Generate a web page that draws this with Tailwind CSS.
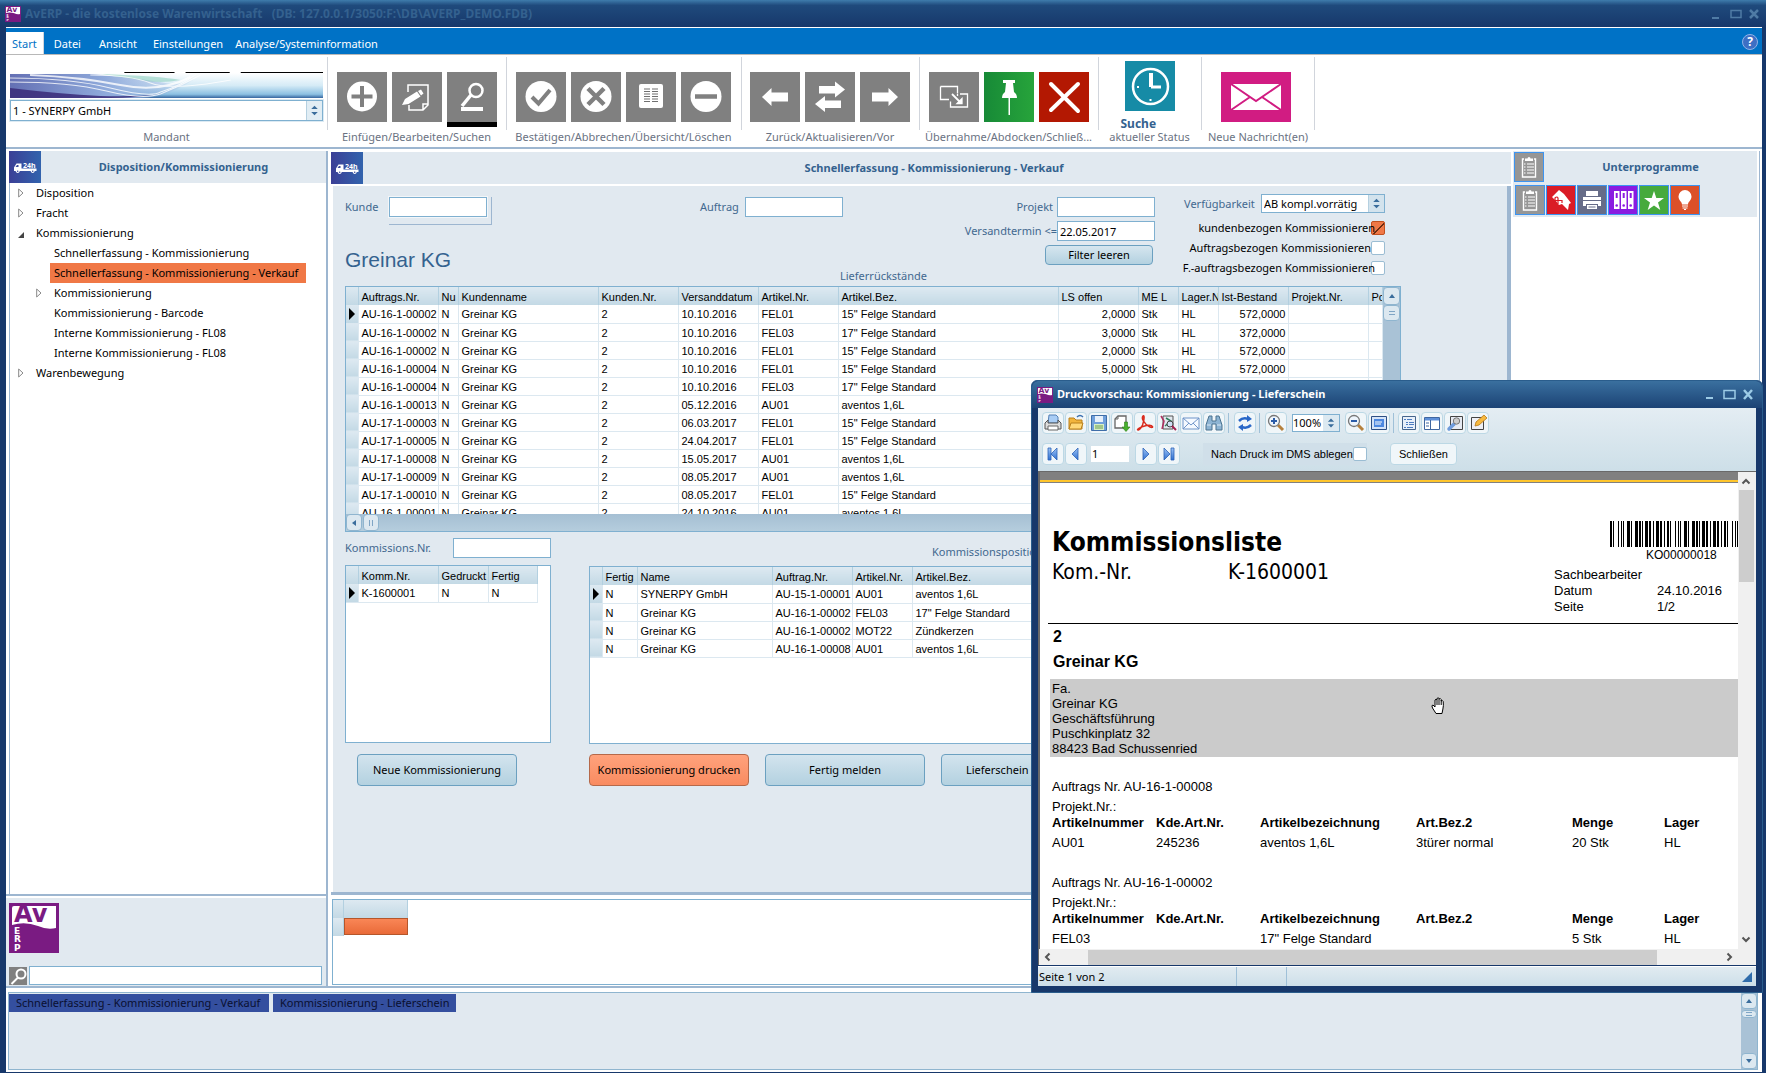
<!DOCTYPE html>
<html lang="de">
<head>
<meta charset="utf-8">
<title>AvERP - die kostenlose Warenwirtschaft</title>
<script src="https://cdn.jsdelivr.net/npm/@tailwindcss/browser@4"></script>
</head>
<body class="font-['Noto_Sans',sans-serif] text-[11px] text-black">

<svg class="absolute size-0" aria-hidden="true">
  <defs>
    <linearGradient id="gTruck"><stop offset="0" stop-color="#3b3f96"/><stop offset="1" stop-color="#3263ad"/></linearGradient>
    <linearGradient id="gBlue" x1="0" x2="0" y1="0" y2="1"><stop offset="0" stop-color="#9cc3f5"/><stop offset="1" stop-color="#2f6fd0"/></linearGradient>
    <symbol id="truck" viewBox="0 0 32 32">
      <rect width="32" height="32" fill="url(#gTruck)"/>
      <path fill="#fff" d="M5 20v-3.500l2.500-4H12.500v5H27.500v2.500z"/>
      <circle cx="8.700" cy="20.300" r="1.800" fill="#fff"/><circle cx="23.700" cy="20.300" r="1.800" fill="#fff"/>
      <circle cx="8.700" cy="20.300" r=".8" fill="#3b4a9c"/><circle cx="23.700" cy="20.300" r=".8" fill="#3b4a9c"/>
      <path d="M6.500 16l1.500-2H9.500v2z" fill="#3b4a9c"/>
      <text x="14" y="16.500" font-size="7" font-weight="700" font-family="Noto Sans, sans-serif" fill="#fff">24h</text>
    </symbol>
    <symbol id="logo" viewBox="0 0 50 50">
      <rect width="50" height="50" fill="#7a1b82"/>
      <path fill="#fff" d="M3 5q0-2 2-2h42v22q-9 2-18-2-13-5-26-1z"/>
      <text x="5" y="19" font-size="24" font-weight="700" font-family="DejaVu Sans, sans-serif" fill="#7a1b82">Av</text>
      <g font-size="9" font-weight="700" font-family="DejaVu Sans, sans-serif" fill="#fff"><text x="5" y="30.500">E</text><text x="5" y="39">R</text><text x="5" y="47.500">P</text></g>
    </symbol>
    <symbol id="spin" viewBox="0 0 16 18"><path fill="#3a6d9c" d="M8 4l3.500 3.500h-7zM8 14l3.500-3.500h-7z"/></symbol>
    <symbol id="clip" viewBox="0 0 28 28">
      <path fill="none" stroke="#fff" stroke-width="1.400" d="M9 6H7.500v18h13V6H19"/>
      <path fill="#fff" d="M10 8V5.500h2.500a1.500 1.500 0 0 1 3 0H18V8z"/>
      <path stroke="#fff" stroke-width="1.200" d="M9 11h1.500M12 11h7M9 14h1.500M12 14h7M9 17h1.500M12 17h7M9 20h1.500M12 20h7"/>
    </symbol>
  </defs>
</svg>

<div class="relative flex min-h-screen flex-col bg-[#17386b] pb-px">

  <!-- window title -->
  <header class="flex h-[27px] items-center bg-linear-to-b from-[#3f7cac] from-0% via-[#1f4a7c] via-20% to-[#17386b] pl-[5px] pr-1.5 text-[#34618f]">
    <svg class="size-4"><use href="#logo"/></svg>
    <h1 class="ml-1 whitespace-pre text-xs font-bold">AvERP - die kostenlose Warenwirtschaft   (DB: 127.0.0.1/3050:F:\DB\AVERP_DEMO.FDB)</h1>
    <svg class="ml-auto h-4 w-12" fill="none" stroke="#4f7ba5" viewBox="0 0 48 16"><path stroke-width="2" d="M0 12h7"/><path stroke-width="1.500" d="M19 4.500h10v7H19z"/><path stroke-width="2.500" d="M38 4l8 8M46 4l-8 8"/></svg>
  </header>

  <div class="ml-1.5 mr-1 flex flex-1 flex-col bg-white">
    <!-- menu -->
    <nav class="mt-px flex h-[26px] items-end bg-[#0072c6] text-white [&>a]:flex [&>a]:h-[22px] [&>a]:items-center [&>a]:pt-0.5">
      <a href="#" class="border-r border-gray-300 bg-white px-1.5 text-[#0072c6]">Start</a>
      <a href="#" class="px-2.5">Datei</a>
      <a href="#" class="px-2">Ansicht</a>
      <a href="#" class="pl-2 pr-1.5">Einstellungen</a>
      <a href="#" class="px-1.5">Analyse/Systeminformation</a>
      <button class="mb-1 ml-auto mr-1 size-4 rounded-full border border-[#8fb2e8] bg-[#3d6fc4] text-xs leading-3 font-bold" aria-label="Hilfe">?</button>
    </nav>

    <!-- ribbon -->
    <section class="flex h-[95px] border-t border-b-2 border-t-[#b8b8b8] border-b-[#9db6d0] pt-0.5 text-gray-500 [&>div]:relative [&>div]:flex [&>div]:flex-col [&>div]:items-center [&>div>p]:whitespace-nowrap [&>div>p]:leading-4 [&_button]:size-[50px] [&_button]:bg-[#808080]">
      <div class="w-[321px] px-1">
        <svg class="mt-[15px] h-[26px] w-full" viewBox="0 0 312 26" preserveAspectRatio="none">
          <defs>
            <linearGradient id="b1" x1="0" x2="0" y1="0" y2="1"><stop offset="0" stop-color="#fff"/><stop offset=".5" stop-color="#d5ebf6"/><stop offset=".85" stop-color="#8cc0e2"/><stop offset="1" stop-color="#35659f"/></linearGradient>
            <linearGradient id="b2"><stop offset="0" stop-color="#6470b4"/><stop offset=".5" stop-color="#8faadb"/><stop offset="1" stop-color="#9fb6e0" stop-opacity="0"/></linearGradient>
          </defs>
          <rect y="1" width="312" height="25" fill="url(#b1)"/>
          <path fill="url(#b2)" d="M0 2h80q50 4 80 10 20 0 30-9-30 22-60 23H0z"/>
          <path fill="#3a2a78" opacity=".85" d="M0 16q50 6 90 8 40 1 60-2-25 4-50 4H0z"/>
          <path fill="#8fd0c0" opacity=".6" d="M90 2q60 2 80 6-20 4-40 0z"/>
          <g fill="none" stroke="#fff" opacity=".8"><path d="M0 6q60 0 100 10t50 4q20-6 36-18"/><path d="M0 10q60 0 96 9t54 3q20-8 40-19"/><path stroke-width="2" d="M20 3q50 2 90 10t70-8"/><path d="M80 3q40 0 60 8t80-3"/></g>
          <path stroke="#000" d="M114 .5h50M175 .5h44M230 .5h82"/>
        </svg>
        <label class="relative mt-0.5 flex h-[21px] w-full border border-[#7fb0d0] bg-white text-black outline outline-[#dceaf3]">
          <select class="w-full appearance-none px-0.5 leading-4" aria-label="Mandant"><option>1 - SYNERPY GmbH</option></select>
          <svg class="pointer-events-none h-full w-4 shrink-0 border-l border-[#b5d0e0] bg-[#e1edf4]"><use href="#spin"/></svg>
        </label>
        <p class="mt-2">Mandant</p>
      </div>
      <div class="w-[179px] before:absolute before:left-0 before:top-0 before:h-[73px] before:w-px before:bg-gray-300">
        <div class="mt-[15px] flex h-[57px] items-start gap-[5px]">
          <button aria-label="Einfügen"><svg viewBox="0 0 50 50"><circle cx="25" cy="24.500" r="15" fill="#fff"/><path stroke="#808080" stroke-width="4" d="M25 14v21M14.500 24.500h21"/></svg></button>
          <button aria-label="Bearbeiten"><svg viewBox="0 0 50 50"><path fill="none" stroke="#fff" stroke-width="1.500" d="M16 20v-7h20v20l-5 5H17v-5M36 32h-5v6"/><path fill="#fff" d="M10 33l3-6 12-7.500 3.500 5-12 7.500zM26 19l3-1.500 2.500 4-2.500 2z"/></svg></button>
          <button class="box-content border-b-5 border-black" aria-label="Suchen"><svg viewBox="0 0 50 50" fill="none" stroke="#fff"><circle cx="29" cy="18.500" r="6.500" stroke-width="2.500"/><path stroke-width="3.500" d="M24 23l-9 11"/><path stroke-width="4" d="M14 37h22"/></svg></button>
        </div>
        <p>Einfügen/Bearbeiten/Suchen</p>
      </div>
      <div class="w-[235px] before:absolute before:left-0 before:top-0 before:h-[73px] before:w-px before:bg-gray-300">
        <div class="mt-[15px] flex h-[57px] items-start gap-[5px]">
          <button aria-label="Bestätigen"><svg viewBox="0 0 50 50"><circle cx="25" cy="24.500" r="15.500" fill="#fff"/><path fill="none" stroke="#808080" stroke-width="4" d="M16 25l6.500 6.500L34 18"/></svg></button>
          <button aria-label="Abbrechen"><svg viewBox="0 0 50 50"><circle cx="25" cy="24.500" r="15.500" fill="#fff"/><path stroke="#808080" stroke-width="4.500" d="M17 16.500l16 16M33 16.500l-16 16"/></svg></button>
          <button aria-label="Übersicht"><svg viewBox="0 0 50 50"><rect x="13" y="12" width="24" height="24" rx="2" fill="#fff"/><path stroke="#707070" stroke-width="1.200" d="M18 17h6M18 19.500h6M18 22h6M18 24.500h6M18 27h6M18 29.500h6M26 17h6M26 19.500h6M26 22h6M26 24.500h6M26 27h6M26 29.500h6"/></svg></button>
          <button aria-label="Löschen"><svg viewBox="0 0 50 50"><circle cx="25" cy="24.500" r="15.500" fill="#fff"/><path stroke="#808080" stroke-width="4.500" d="M14 24.500h22"/></svg></button>
        </div>
        <p>Bestätigen/Abbrechen/Übersicht/Löschen</p>
      </div>
      <div class="w-[178px] before:absolute before:left-0 before:top-0 before:h-[73px] before:w-px before:bg-gray-300">
        <div class="mt-[15px] flex h-[57px] items-start gap-[5px]">
          <button aria-label="Zurück"><svg viewBox="0 0 50 50" fill="#fff"><path d="M12 25l9.500-9v4.500H38v9H21.500V34z"/></svg></button>
          <button aria-label="Aktualisieren"><svg viewBox="0 0 50 50" fill="#fff"><path d="M40 17.500L30 9.500V14H14v7.500h16v4zM10 32l10-8v4.500h16V36H20v4z"/></svg></button>
          <button aria-label="Vor"><svg viewBox="0 0 50 50" fill="#fff"><path d="M38 25l-9.500-9v4.500H12v9h16.500V34z"/></svg></button>
        </div>
        <p>Zurück/Aktualisieren/Vor</p>
      </div>
      <div class="w-[179px] before:absolute before:left-0 before:top-0 before:h-[73px] before:w-px before:bg-gray-300">
        <div class="mt-[15px] flex h-[57px] items-start gap-[5px]">
          <button aria-label="Übernahme"><svg viewBox="0 0 50 50" fill="none" stroke="#fff" stroke-width="1.300"><path d="M11.500 14.500H28.500v7M11.500 14.500v13H20M28.500 22v2M31 22h7.500v13h-17V29.500"/><path stroke-width="1.800" d="M23 22l8 8"/><path fill="#fff" d="M33 26.500v5h-5z"/></svg></button>
          <button class="bg-[linear-gradient(90deg,#178a37,#27a43b)]!" aria-label="Abdocken"><svg viewBox="0 0 50 50" fill="#fff"><path d="M19 8h12v3h-2l1 9q3 2 3 6H18q0-4 3-6l1-9h-3zM24.500 26h1.500v17h-1.500z"/></svg></button>
          <button class="bg-[#b31802]!" aria-label="Schließen"><svg viewBox="0 0 50 50" stroke="#fff" stroke-width="4" stroke-linecap="round"><path d="M12 12l27 27M39 12L12 38"/></svg></button>
        </div>
        <p>Übernahme/Abdocken/Schließ...</p>
      </div>
      <div class="w-[103px] before:absolute before:left-0 before:top-0 before:h-[73px] before:w-px before:bg-gray-300">
        <div class="mt-1 flex h-[68px] flex-col">
          <button class="bg-[#168ba6]!" aria-label="Suche"><svg viewBox="0 0 50 50" fill="none" stroke="#fff"><circle cx="25.500" cy="25.500" r="17.500" stroke-width="2.500"/><path stroke-width="4" d="M26 12v14"/><path stroke-width="3" d="M26 26h10"/><path stroke-width="2" d="M12 26h2M25.500 38v2"/></svg></button>
          <span class="-ml-1 mt-[3px] text-xs leading-5 font-bold text-[#34628f]">Suche</span>
        </div>
        <p>aktueller Status</p>
      </div>
      <div class="w-[114px] before:absolute before:left-0 before:top-0 before:h-[73px] before:w-px before:bg-gray-300 after:absolute after:right-0 after:top-0 after:h-[73px] after:w-px after:bg-gray-300">
        <div class="mt-[15px] flex h-[57px] items-start pr-1">
          <button class="w-[70px]! bg-[#d11c82]!" aria-label="Neue Nachrichten"><svg viewBox="0 0 70 50"><rect x="10" y="12" width="50" height="26" fill="#fff"/><path fill="none" stroke="#d11c82" stroke-width="2" d="M10 12l25 17 25-17M10 38l19-13M60 38L41 25"/></svg></button>
        </div>
        <p>Neue Nachricht(en)</p>
      </div>
    </section>

    <div class="flex flex-1 items-stretch border-b-2 border-[#9db6d0] pt-0.5">
      <!-- module tree -->
      <aside class="flex w-[322px] shrink-0 flex-col border-r-2 border-[#9db6d0]">
        <div class="ml-[3px] flex h-8 items-center bg-[#e1e9f0]">
          <svg class="size-8"><use href="#truck"/></svg>
          <h2 class="mr-8 flex-1 pl-8 text-center font-bold text-[#34628f]">Disposition/Kommissionierung</h2>
        </div>
        <ul class="ml-[3px] flex-1 border-l border-[#9db6d0] pl-2 [&_a]:flex [&_a]:h-5 [&_a]:items-center [&_a]:whitespace-nowrap">
          <li><a href="#"><svg class="mr-3 w-1.5" viewBox="0 0 6 10"><path fill="#fff" stroke="#888" d="M.7 1v8L5 5z"/></svg>Disposition</a></li>
          <li><a href="#"><svg class="mr-3 w-1.5" viewBox="0 0 6 10"><path fill="#fff" stroke="#888" d="M.7 1v8L5 5z"/></svg>Fracht</a></li>
          <li><a href="#"><svg class="mr-3 w-1.5 overflow-visible" viewBox="0 0 6 10"><path fill="#444" d="M6 4v6H0z"/></svg>Kommissionierung</a>
            <ul class="pl-8 [&_a]:w-fit [&_a]:px-1">
              <li><a href="#">Schnellerfassung - Kommissionierung</a></li>
              <li><a href="#" class="bg-[#f07846] pr-2!">Schnellerfassung - Kommissionierung - Verkauf</a></li>
              <li class="-ml-3.5"><a href="#" class="px-0!"><svg class="mr-3 w-1.5" viewBox="0 0 6 10"><path fill="#fff" stroke="#888" d="M.7 1v8L5 5z"/></svg>Kommissionierung</a></li>
              <li><a href="#">Kommissionierung - Barcode</a></li>
              <li><a href="#">Interne Kommissionierung - FL08</a></li>
              <li><a href="#">Interne Kommissionierung - FL08</a></li>
            </ul></li>
          <li><a href="#"><svg class="mr-3 w-1.5" viewBox="0 0 6 10"><path fill="#fff" stroke="#888" d="M.7 1v8L5 5z"/></svg>Warenbewegung</a></li>
        </ul>
        <div class="border-t-2 border-[#9db6d0] pt-0.5">
          <div class="flex h-[88px] flex-col justify-between bg-[#e1e9f0] pl-[3px] pr-1 pt-[5px] pb-px">
            <svg class="size-[50px]"><use href="#logo"/></svg>
            <div class="flex items-center gap-0.5">
              <svg class="size-[18px] bg-[#808080]" viewBox="0 0 18 18" fill="none" stroke="#fff" stroke-width="2"><circle cx="12" cy="7" r="4.500"/><path d="M9 10.500L2.500 17"/></svg>
              <input class="h-[19px] flex-1 border border-[#7fb0d0] bg-white px-1" aria-label="Suche im Menü">
            </div>
          </div>
        </div>
      </aside>

      <!-- record form -->
      <main class="ml-[3px] flex min-w-0 flex-1 flex-col">
        <div class="mt-px flex h-8 items-center bg-[#e1e9f0]">
          <svg class="size-8"><use href="#truck"/></svg>
          <h2 class="flex-1 pr-1.5 text-center font-bold text-[#34628f]">Schnellerfassung - Kommissionierung - Verkauf</h2>
        </div>
        <div class="ml-0.5 mt-0.5 flex-1 border-r-4 border-[#9db6d0] bg-[#e1e9f0] pl-3">
          <form class="flex h-[100px] text-[#41688f] [&_input[type=text]]:h-5 [&_input[type=text]]:w-[98px] [&_input[type=text]]:border [&_input[type=text]]:border-[#7fb0d0] [&_input[type=text]]:bg-white [&_input[type=text]]:px-0.5 [&_input[type=text]]:text-black">
            <div class="w-[355px] shrink-0 pt-[11px]">
              <div class="flex items-start"><label class="w-11 leading-5" for="kunde">Kunde</label><span class="h-[28px] border-b border-r border-[#9db6d0] pr-1"><input type="text" id="kunde" class="outline outline-white/60"></span></div>
              <div class="mt-[23px] font-['Liberation_Sans',sans-serif] text-[21px] leading-6 text-[#34628f]">Greinar KG</div>
            </div>
            <div class="w-[264px] shrink-0 pt-[11px]">
              <div class="flex"><label class="w-[45px] leading-5" for="auftrag">Auftrag</label><input type="text" id="auftrag"></div>
              <div class="mt-[49px] pl-[140px] leading-5">Lieferrückstände</div>
            </div>
            <div class="w-[191px] shrink-0 pt-[11px]">
              <div class="flex justify-end gap-1"><label class="leading-5" for="projekt">Projekt</label><input type="text" id="projekt"></div>
              <div class="mt-1 flex justify-end"><label class="whitespace-nowrap leading-5" for="vt">Versandtermin &lt;=</label><input type="text" id="vt" value="22.05.2017"></div>
              <div class="mt-1 flex justify-end pr-0.5"><button type="button" class="h-5 w-[108px] rounded border border-[#6ba0c0] bg-linear-to-b from-[#d6e6ef] to-[#b3d1e0] leading-4 text-black">Filter leeren</button></div>
            </div>
            <div class="ml-7 w-[202px] shrink-0 pt-2">
              <div class="flex items-start justify-between"><label class="pl-px leading-5" for="verf">Verfügbarkeit</label>
                <span class="flex h-[19px] w-[124px] border border-[#7fb0d0] bg-white"><select id="verf" class="w-full appearance-none px-0.5 leading-4 text-black"><option>AB kompl.vorrätig</option></select><svg class="pointer-events-none h-full w-4 shrink-0 border-l border-[#b5d0e0] bg-[#d3e3ed]"><use href="#spin"/></svg></span></div>
              <div class="mt-1 text-black [&>label]:flex [&>label]:h-5 [&>label]:items-center [&>label]:justify-end [&>label]:whitespace-nowrap [&_input]:shrink-0 [&_span]:z-10">
                <label><span class="-mr-1">kundenbezogen Kommissionieren</span><input type="checkbox" checked class="size-3.5 appearance-none rounded-xs border border-[#9bbdd3] bg-white checked:border-[#c0501f] checked:bg-[#f07846] checked:bg-[linear-gradient(135deg,transparent_50%,#6b2d12_50%,#6b2d12_62%,transparent_62%)]"></label>
                <label><span>Auftragsbezogen Kommissionieren</span><input type="checkbox" class="size-3.5 appearance-none rounded-xs border border-[#9bbdd3] bg-white"></label>
                <label><span class="-mr-1">F.-auftragsbezogen Kommissionieren</span><input type="checkbox" class="size-3.5 appearance-none rounded-xs border border-[#9bbdd3] bg-white"></label>
              </div>
            </div>
          </form>

          <div class="h-[246px] w-[1056px] border border-[#7fb0d0] bg-white font-['Liberation_Sans',sans-serif] text-[11px]">
            <div class="flex h-[227px]">
              <div class="min-w-0 flex-1 overflow-hidden">
                <table class="w-[1037px] table-fixed border-collapse [&_td]:h-[18px] [&_td]:overflow-hidden [&_td]:border-b [&_td]:border-r [&_td]:border-[#dce8f0] [&_td]:pt-px [&_td]:pl-[3px] [&_td]:pr-0.5 [&_td]:leading-4 [&_td]:whitespace-nowrap [&_th]:h-[18px] [&_th]:overflow-hidden [&_th]:border-r [&_th]:border-[#b3d0e0] [&_th]:bg-linear-to-b [&_th]:from-[#dde9f1] [&_th]:to-[#c3d9e5] [&_th]:pt-0.5 [&_th]:pl-[3px] [&_th]:text-left [&_th]:leading-4 [&_th]:font-normal [&_th]:whitespace-nowrap">
                  <colgroup><col class="w-3"><col class="w-20"><col class="w-5"><col class="w-35"><col class="w-20"><col class="w-20"><col class="w-20"><col class="w-55"><col class="w-20"><col class="w-10"><col class="w-10"><col class="w-[70px]"><col class="w-20"><col></colgroup>
                  <thead><tr><th></th><th>Auftrags.Nr.</th><th>Nu</th><th>Kundenname</th><th>Kunden.Nr.</th><th>Versanddatum</th><th>Artikel.Nr.</th><th>Artikel.Bez.</th><th>LS offen</th><th>ME L</th><th>Lager.Nr.</th><th>Ist-Bestand</th><th>Projekt.Nr.</th><th>Po</th></tr></thead>
                  <tbody id="backlog"></tbody>
                </table>
              </div>
              <div class="flex w-[17px] flex-col bg-[#a9c2d6]">
                <button class="flex h-[18px] items-center justify-center rounded border border-[#8fb5cf] bg-[#dce8f0]" aria-label="nach oben"><svg class="size-2" viewBox="0 0 8 8"><path fill="#3a6d9c" d="M4 2l3 4H1z"/></svg></button>
                <div class="flex h-4 items-center justify-center rounded border border-[#8fb5cf] bg-[#dce8f0]"><i class="h-1 w-1.5 border-y border-[#7fa5c5]"></i></div>
              </div>
            </div>
            <div class="flex h-[17px] bg-linear-to-b from-[#a5bfd3] to-[#b5cddd]">
              <button class="flex w-4 items-center justify-center rounded border border-[#8fb5cf] bg-[#dce8f0]" aria-label="nach links"><svg class="size-2" viewBox="0 0 8 8"><path fill="#3a6d9c" d="M2 4l4-3v6z"/></svg></button>
              <div class="ml-px flex w-4 items-center justify-center rounded border border-[#8fb5cf] bg-[#dce8f0]"><i class="h-1.5 w-1 border-x border-[#7fa5c5]"></i></div>
            </div>
          </div>

          <div class="flex pt-1.5">
            <section class="w-[206px] shrink-0">
              <div class="flex h-[27px] items-start justify-between text-[#41688f]"><label class="leading-5" for="komm">Kommissions.Nr.</label><input id="komm" class="h-5 w-[98px] border border-[#7fb0d0] bg-white"></div>
              <div class="h-[178px] border border-[#7fb0d0] bg-white font-['Liberation_Sans',sans-serif] text-[11px]">
                <table class="w-[192px] table-fixed border-collapse [&_td]:h-[18px] [&_td]:border-b [&_td]:border-r [&_td]:border-[#dce8f0] [&_td]:pt-px [&_td]:pl-[3px] [&_td]:leading-4 [&_td]:whitespace-nowrap [&_th]:h-[18px] [&_th]:border-r [&_th]:border-[#b3d0e0] [&_th]:bg-linear-to-b [&_th]:from-[#dde9f1] [&_th]:to-[#c3d9e5] [&_th]:pt-0.5 [&_th]:pl-[3px] [&_th]:text-left [&_th]:leading-4 [&_th]:font-normal">
                  <colgroup><col class="w-3"><col class="w-20"><col class="w-[50px]"><col></colgroup>
                  <thead><tr><th></th><th>Komm.Nr.</th><th>Gedruckt</th><th>Fertig</th></tr></thead>
                  <tbody id="picklists"></tbody>
                </table>
              </div>
              <button class="ml-3 mt-[11px] h-8 w-40 rounded border border-[#6ba0c0] bg-linear-to-b from-[#d3e4ee] to-[#b3d1e0]">Neue Kommissionierung</button>
            </section>
            <section class="ml-[38px] w-[812px] shrink-0">
              <div class="h-7 pl-[343px] pt-1 leading-5 text-[#41688f]">Kommissionspositionen</div>
              <div class="h-[178px] overflow-hidden border border-[#7fb0d0] bg-white font-['Liberation_Sans',sans-serif] text-[11px]">
                <table class="w-[810px] table-fixed border-collapse [&_td]:h-[18px] [&_td]:border-b [&_td]:border-r [&_td]:border-[#dce8f0] [&_td]:pt-px [&_td]:pl-[3px] [&_td]:leading-4 [&_td]:whitespace-nowrap [&_th]:h-[18px] [&_th]:border-r [&_th]:border-[#b3d0e0] [&_th]:bg-linear-to-b [&_th]:from-[#dde9f1] [&_th]:to-[#c3d9e5] [&_th]:pt-0.5 [&_th]:pl-[3px] [&_th]:text-left [&_th]:leading-4 [&_th]:font-normal">
                  <colgroup><col class="w-3"><col class="w-[35px]"><col class="w-[135px]"><col class="w-20"><col class="w-15"><col></colgroup>
                  <thead><tr><th></th><th>Fertig</th><th>Name</th><th>Auftrag.Nr.</th><th>Artikel.Nr.</th><th>Artikel.Bez.</th></tr></thead>
                  <tbody id="positions"></tbody>
                </table>
              </div>
              <div class="mt-2.5 flex gap-4 [&>button]:h-8 [&>button]:w-40 [&>button]:rounded [&>button]:border">
                <button class="border-[#b5694a] bg-linear-to-b from-[#ffa27c] to-[#f98b60]">Kommissionierung drucken</button>
                <button class="border-[#6ba0c0] bg-linear-to-b from-[#d3e4ee] to-[#b3d1e0]">Fertig melden</button>
                <button class="border-[#6ba0c0] bg-linear-to-b from-[#d3e4ee] to-[#b3d1e0] pl-6 text-left">Lieferschein drucken</button>
              </div>
            </section>
          </div>
        </div>
        <div class="mr-1 h-[94px] border-t-3 border-[#9db6d0] pt-1">
          <div class="ml-px h-[86px] border border-[#7fb0d0] bg-white">
            <div class="grid h-9 w-[75px] grid-cols-[11px_64px] grid-rows-2 [&>*]:border-r [&>*]:border-[#b3d0e0]">
              <i class="bg-linear-to-b from-[#dde9f1] to-[#c3d9e5]"></i><i class="bg-linear-to-b from-[#dde9f1] to-[#c3d9e5]"></i>
              <i class="bg-linear-to-b from-[#dde9f1] to-[#c3d9e5]"></i><i class="mb-px border! border-[#b5562b]! bg-linear-to-b from-[#f98656] to-[#e96a38]"></i>
            </div>
          </div>
        </div>
      </main>

      <!-- subprograms -->
      <aside class="ml-0.5 mr-0.5 w-[247px] shrink-0 border-r border-[#9db6d0]">
        <div class="mr-0.5 h-[66px] bg-[#e1e9f0] pl-px pt-px">
          <div class="flex items-center">
            <svg class="size-[30px] border border-[#3d94f0] bg-[#969696]"><use href="#clip"/></svg>
            <h2 class="flex-1 text-center font-bold text-[#34628f]">Unterprogramme</h2>
          </div>
          <div class="ml-px mt-[3px] flex gap-px [&>button]:size-[30px] [&>button]:border [&>button]:border-[#3d94f0]">
            <button class="bg-[#969696]" aria-label="Liste"><svg class="size-7"><use href="#clip"/></svg></button>
            <button class="bg-[#da1c26]" aria-label="Etikett"><svg viewBox="0 0 28 28"><path fill="#fff" d="M5 11l7-7 5 4 7 9-2 1-1 6-6-6-3 1-3-4z"/><path fill="none" stroke="#da1c26" stroke-width="1.200" d="M8 17v-5q2-2 3 0v6M8 14.500h7v2.500"/></svg></button>
            <button class="bg-[#666c88]" aria-label="Drucken"><svg viewBox="0 0 28 28" fill="#fff"><path d="M8 5h12v5H8zM5 11h18v3H5zM5 15h18v5h-3v-2H8v2H5zM9 19h10v4H9z"/><path stroke="#666c88" d="M10.500 21h7"/></svg></button>
            <button class="bg-[#8a1be0]" aria-label="Ordner"><svg viewBox="0 0 28 28"><path fill="#fff" d="M5 5h5.500v18H5zM12 5h5.500v18H12zM19 5h5.500v18H19z"/><g fill="#8a1be0"><path d="M6.700 7h2v5h-2zM13.700 7h2v5h-2zM20.700 7h2v5h-2z"/><circle cx="7.700" cy="19.500" r="1.300"/><circle cx="14.700" cy="19.500" r="1.300"/><circle cx="21.700" cy="19.500" r="1.300"/></g></svg></button>
            <button class="bg-[#46aa3c]" aria-label="Favoriten"><svg viewBox="0 0 28 28"><path fill="#fff" d="M14 5l2.300 7H24l-6 4.500 2.300 7.500L14 19.500 7.700 24l2.300-7.500L4 12h7.700z"/></svg></button>
            <button class="bg-[#dc5028]" aria-label="Hinweise"><svg viewBox="0 0 28 28"><path fill="#fff" d="M14 4a6.500 6.500 0 0 1 6.500 6.500c0 4-3.500 5-3.500 8h-6c0-3-3.500-4-3.500-8A6.500 6.500 0 0 1 14 4z"/><path fill="none" stroke="#fff" d="M11 20h6M11.500 22h5M13 23.500h2"/></svg></button>
          </div>
        </div>
      </aside>
    </div>

    <!-- open programs -->
    <footer class="mb-0.5 mr-1 ml-0.5 mt-1 flex h-[78px] border border-[#8fb5cf] bg-[#e1e9f0]">
      <div class="flex flex-1 items-start gap-1 pt-px text-[#0a1030] [&>button]:h-[18px] [&>button]:bg-[#344f9f] [&>button]:px-[7px] [&>button]:text-left [&>button]:leading-4 [&>button]:whitespace-nowrap">
        <button class="w-[260px]">Schnellerfassung - Kommissionierung - Verkauf</button>
        <button class="w-[183px]">Kommissionierung - Lieferschein</button>
      </div>
      <div class="flex w-4 flex-col bg-[#a9c2d6]">
        <button class="flex h-4 items-center justify-center rounded border border-[#8fb5cf] bg-[#dce8f0]" aria-label="nach oben"><svg class="size-2" viewBox="0 0 8 8"><path fill="#3a6d9c" d="M4 2l3 4H1z"/></svg></button>
        <div class="mt-px flex h-2 items-center justify-center rounded border border-[#8fb5cf] bg-[#dce8f0]"><i class="h-1 w-1.5 border-y border-[#7fa5c5]"></i></div>
        <button class="mt-auto flex h-4 items-center justify-center rounded border border-[#8fb5cf] bg-[#dce8f0]" aria-label="nach unten"><svg class="size-2" viewBox="0 0 8 8"><path fill="#3a6d9c" d="M4 6L1 2h6z"/></svg></button>
      </div>
    </footer>
  </div>

  <!-- print preview window -->
  <div role="dialog" aria-label="Druckvorschau" class="absolute right-[3px] top-[380px] z-20 flex h-[613px] w-[732px] flex-col rounded-t-md border border-[#2a5d8c] bg-[#17386b] px-[6px] pb-[6px]">
    <div class="-mx-1.5 flex h-[27px] shrink-0 items-center rounded-t-md bg-linear-to-b from-[#3a709f] to-[#1c4375] pl-[5px] pr-2">
      <svg class="size-4"><use href="#logo"/></svg>
      <h2 class="ml-1 font-bold text-white">Druckvorschau: Kommissionierung - Lieferschein</h2>
      <svg class="ml-auto h-4 w-12" fill="none" stroke="#9ccbe6" viewBox="0 0 48 16"><path stroke-width="2" d="M0 11h7"/><path stroke-width="1.500" d="M18 3.500h11v8H18z"/><path stroke-width="2.500" d="M38 3l8 9M46 3l-8 9"/></svg>
    </div>

    <div class="h-[63px] shrink-0 bg-linear-to-b from-[#e4edf3] to-[#cddfe8] pl-1 pt-1 [&_button]:h-[22px] [&_button]:rounded [&_button]:border [&_button]:border-[#bcd8e5] [&_button]:bg-[#f0f6f9]">
      <div class="flex items-center gap-px [&>button]:w-[22px] [&_svg]:size-5">
        <button aria-label="Drucken"><svg viewBox="0 0 20 20"><path fill="#a9cdf5" stroke="#5580b5" d="M6 2h7l2 2v6H5z"/><path fill="#ddd" stroke="#555" d="M2 10l3-3v3h10V7l3 3v6H2z"/><path fill="#fff" stroke="#666" d="M5 13h10v4H5z"/></svg></button>
        <button aria-label="Öffnen"><svg viewBox="0 0 20 20"><path fill="#f2b53c" stroke="#b9801c" d="M3 16V5h5l2 2h6v9z"/><path fill="#ffd978" stroke="#b9801c" d="M3 16l2-6h12l-2 6z"/><path fill="none" stroke="#3b6fb0" stroke-width="1.500" d="M11 4q3-3 6 0"/></svg></button>
        <button aria-label="Speichern"><svg viewBox="0 0 20 20"><path fill="#6f9fdb" stroke="#3f6ea8" d="M2.500 2.500h15v15h-15z"/><path fill="#e6f0fb" d="M6 3h8v6H6z"/><path fill="#d6efc4" d="M5 11h10v6H5z"/><path stroke="#6b9b52" d="M6 13h8M6 15h8"/></svg></button>
        <button aria-label="Exportieren"><svg viewBox="0 0 20 20"><path fill="#fff" stroke="#666" stroke-width="1.300" d="M6 3h8v12H3V6z"/><path stroke="#666" d="M6 3v3H3" fill="none"/><path fill="#48b02c" stroke="#2c7a18" stroke-width=".6" d="M12.500 9h3v5h2.500l-4 4.500-4-4.500h2.500z"/></svg></button>
        <button aria-label="PDF"><svg viewBox="0 0 20 20"><path fill="none" stroke="#d92a1c" stroke-width="1.500" d="M8 3q-1.500 2 .5 5 2 4 6.500 6 3 1 2.500-.5-1-2-6-1-5 1-8 3-2 1.500 0 1.500 2-.5 4-5Q9.500 6 9 3.500 8.700 2.300 8 3z"/></svg></button>
        <button aria-label="PDF suchen"><svg viewBox="0 0 20 20"><path fill="#e2e8ee" stroke="#555" d="M5 3h10v13H5z"/><path fill="none" stroke="#b03060" stroke-width="1.500" d="M3 3l3 5-2 8"/><path fill="none" stroke="#2d7d5a" stroke-width="1.500" d="M8 5l5 3-6 5"/><circle cx="12" cy="11" r="3" fill="#cfe0f5" stroke="#444"/><path stroke="#a02050" stroke-width="2" d="M14 13l4 4"/></svg></button>
        <button aria-label="E-Mail"><svg viewBox="0 0 20 20"><path fill="#f5f9ff" stroke="#6f94c8" d="M2 5h16v11H2z"/><path fill="none" stroke="#6f94c8" d="M2 5l8 7 8-7M2 16l6-6M18 16l-6-6"/></svg></button>
        <button aria-label="Suchen"><svg viewBox="0 0 20 20"><path fill="#8db4d3" stroke="#4a728f" d="M5 3h3v5h4V3h3l3 9v5h-6v-6H8v6H2v-5z"/><path stroke="#dbe9f5" d="M3 12h4M13 12h4"/></svg></button>
        <i class="mx-0.5 h-5 w-px bg-[#9fc0d8]"></i>
        <button class="ml-0.5" aria-label="Aktualisieren"><svg viewBox="0 0 20 20"><g fill="none" stroke="#2a68c8" stroke-width="2.500"><path d="M4 8q4-4 9-2M16 12q-4 4-9 2"/></g><path fill="#2a68c8" d="M12 2l5 4-5 3zM8 11l-5 3 5 4z"/></svg></button>
        <i class="mx-0.5 h-5 w-px bg-[#9fc0d8]"></i>
        <button class="ml-0.5" aria-label="Vergrößern"><svg viewBox="0 0 20 20"><path stroke="#b5803c" stroke-width="3" d="M12 12l5 5"/><circle cx="8" cy="8" r="5.500" fill="#eef5fc" stroke="#777" stroke-width="1.300"/><path stroke="#2b5ca8" stroke-width="2" d="M5 8h6M8 5v6"/></svg></button>
        <label class="mx-1 flex h-[18px] w-[48px] border border-[#7fb0d0] bg-white"><select class="w-[30px] appearance-none leading-4" aria-label="Zoom"><option>100%</option></select><svg class="size-auto! h-4! w-4! shrink-0 bg-[#dce9f1]"><use href="#spin"/></svg></label>
        <button aria-label="Verkleinern"><svg viewBox="0 0 20 20"><path stroke="#b5803c" stroke-width="3" d="M12 12l5 5"/><circle cx="8" cy="8" r="5.500" fill="#eef5fc" stroke="#777" stroke-width="1.300"/><path stroke="#2b5ca8" stroke-width="2" d="M5 8h6"/></svg></button>
        <button aria-label="Vollbild"><svg viewBox="0 0 20 20"><path fill="#d5e4f8" stroke="#2d4f85" d="M2.500 3.500h15v13h-15z"/><path fill="#4d88e0" d="M5 6h10v8H5z"/><path stroke="#fff" d="M6 9h7M6 11h6"/></svg></button>
        <i class="mx-0.5 h-5 w-px bg-[#9fc0d8]"></i>
        <button class="ml-px" aria-label="Gliederung"><svg viewBox="0 0 20 20"><path fill="#e8f0fa" stroke="#45648c" d="M3.500 3.500h13v13h-13z"/><path stroke="#4d7cc0" d="M5 6.500h2M8 6.500h5M7 9.500h2M10 9.500h5M7 11.500h2M10 11.500h5M5 14.500h2M8 14.500h6"/></svg></button>
        <button aria-label="Miniaturen"><svg viewBox="0 0 20 20"><path fill="#fff" stroke="#3f66a0" d="M2.500 4.500h15v12h-15z"/><path fill="#5d8fd8" d="M3 5h14v2.500H3z"/><path stroke="#3f66a0" d="M8.500 7v9M4 10h3M4 13h3"/></svg></button>
        <button aria-label="Seite einrichten"><svg viewBox="0 0 20 20"><path fill="#e6eaf2" stroke="#444" d="M5.500 3.500h12v13h-12z"/><path stroke="#6f9bdb" stroke-width="3.500" stroke-linecap="round" d="M4 16l5-5"/><circle cx="11.500" cy="8" r="3.200" fill="#ccc" stroke="#777"/></svg></button>
        <button aria-label="Bearbeiten"><svg viewBox="0 0 20 20"><path fill="#eef0f5" stroke="#444" d="M3.500 4.500h12v12h-12z"/><path fill="#f7b93e" stroke="#b57718" stroke-width=".8" d="M7 13l1-4 8-7 3 3-8 7z"/></svg></button>
      </div>
      <div class="mt-[9px] flex items-center [&_svg]:size-5 [&_button]:shrink-0">
        <button class="w-[22px]" aria-label="Erste Seite"><svg viewBox="0 0 20 20" fill="url(#gBlue)" stroke="#2c62b8" stroke-width=".8"><path d="M5 4h3v12H5zM14 4v12l-6-6z"/></svg></button>
        <button class="ml-px w-[22px]" aria-label="Vorherige Seite"><svg viewBox="0 0 20 20" fill="url(#gBlue)" stroke="#2c62b8" stroke-width=".8"><path d="M12 4v12l-6-6z"/></svg></button>
        <input class="ml-1 h-4 w-[38px] bg-white px-px leading-4" value="1" aria-label="Seite">
        <button class="ml-1.5 w-[22px]" aria-label="Nächste Seite"><svg viewBox="0 0 20 20" fill="url(#gBlue)" stroke="#2c62b8" stroke-width=".8"><path d="M7 4v12l6-6z"/></svg></button>
        <button class="ml-px w-[22px]" aria-label="Letzte Seite"><svg viewBox="0 0 20 20" fill="url(#gBlue)" stroke="#2c62b8" stroke-width=".8"><path d="M12 4h3v12h-3zM5 4v12l6-6z"/></svg></button>
        <label class="ml-[23px] flex h-[22px] w-[164px] items-center bg-[#d0dfe9] pl-2 font-['Liberation_Sans',sans-serif] whitespace-nowrap"><span>Nach Druck im DMS ablegen</span><input type="checkbox" class="size-3.5 shrink-0 appearance-none rounded-xs border border-[#9bbdd3] bg-white"></label>
        <button class="ml-[23px] w-[67px] font-['Liberation_Sans',sans-serif] leading-4">Schließen</button>
      </div>
    </div>

    <div class="grid min-h-0 flex-1 grid-cols-[1fr_18px] grid-rows-[1fr_16px] border-l border-t border-[#696969] bg-[#f0f0f0]">
      <article class="flex min-h-0 flex-col overflow-hidden border-l border-[#696969] bg-white font-['Liberation_Sans',sans-serif] text-[13px] leading-4">
        <div class="h-2 shrink-0 bg-[#808080]"></div><div class="h-[3px] shrink-0 border-b border-[#808080] bg-[#ffc52b]"></div>
        <div class="ml-2 border-b border-black">
          <div class="flex h-[140px] justify-between pl-1">
            <div class="pt-[43px] font-['DejaVu_Sans_Condensed','DejaVu_Sans',sans-serif]">
              <h3 class="text-[26px] leading-8 font-bold">Kommissionsliste</h3>
              <div class="flex text-[21px] leading-7"><span class="w-44">Kom.-Nr.</span><span>K-1600001</span></div>
            </div>
            <div class="w-[184px] pt-[38px]">
              <svg class="ml-auto h-[26px] w-32" viewBox="0 0 128 26" preserveAspectRatio="none" fill="none" stroke="#000" stroke-width="26"><path stroke-dasharray="2 1 1 4 1 2 1 1 1 3 3 1 1 3 3 1 2 1 1 2 3 1 2 2 1 2 3 1 2 2 1 2" d="M0 13h128"/></svg>
              <div class="pl-[92px] text-xs leading-4">KO00000018</div>
              <dl class="mt-1 grid grid-cols-[103px_1fr]"><dt>Sachbearbeiter</dt><dd></dd><dt>Datum</dt><dd>24.10.2016</dd><dt>Seite</dt><dd>1/2</dd></dl>
            </div>
          </div>
        </div>
        <div class="pl-[13px] pt-[5px] text-base font-bold"><div class="leading-4">2</div><div class="mt-[5px] leading-6">Greinar KG</div></div>
        <div class="ml-2.5 mt-[5px] flex h-[78px] shrink-0 bg-[#cbcbcb] pl-0.5 pt-0.5">
          <address class="leading-[15px] not-italic">Fa.<br>Greinar KG<br>Geschäftsführung<br>Puschkinplatz 32<br>88423 Bad Schussenried</address>
          <svg class="ml-auto mr-[291px] mt-4 h-[18px] w-4" viewBox="0 0 16 18"><path fill="#fff" stroke="#000" d="M5 16.500L1.500 11Q0 8 2 8l2 2V3q1.300-1.600 2 0V1.500q1.200-1.400 2 0V2q1.500-1.200 2.200.5V4q1.500-1 2 .5.500 4.500-.3 7.500L11 16.500z"/><path stroke="#000" d="M6 3v5M8 2v6M10.200 3v5"/></svg>
        </div>
        <section class="pl-3 pt-[22px]">
          <div>Auftrags Nr. AU-16-1-00008</div><div class="mt-1">Projekt.Nr.:</div>
          <table class="w-full table-fixed text-left [&_th]:p-0 [&_th]:font-bold [&_td]:pt-1 [&_td]:px-0"><colgroup><col class="w-[104px]"><col class="w-[104px]"><col class="w-39"><col class="w-39"><col class="w-[92px]"><col></colgroup>
            <tr><th>Artikelnummer</th><th>Kde.Art.Nr.</th><th>Artikelbezeichnung</th><th>Art.Bez.2</th><th>Menge</th><th>Lager</th></tr>
            <tr><td>AU01</td><td>245236</td><td>aventos 1,6L</td><td>3türer normal</td><td>20 Stk</td><td>HL</td></tr></table>
        </section>
        <section class="pl-3 pt-6">
          <div>Auftrags Nr. AU-16-1-00002</div><div class="mt-1">Projekt.Nr.:</div>
          <table class="w-full table-fixed text-left [&_th]:p-0 [&_th]:font-bold [&_td]:pt-1 [&_td]:px-0"><colgroup><col class="w-[104px]"><col class="w-[104px]"><col class="w-39"><col class="w-39"><col class="w-[92px]"><col></colgroup>
            <tr><th>Artikelnummer</th><th>Kde.Art.Nr.</th><th>Artikelbezeichnung</th><th>Art.Bez.2</th><th>Menge</th><th>Lager</th></tr>
            <tr><td>FEL03</td><td></td><td>17" Felge Standard</td><td></td><td>5 Stk</td><td>HL</td></tr></table>
        </section>
      </article>
      <div class="flex flex-col items-center pr-0.5">
        <svg class="h-[18px] w-2.5 shrink-0" viewBox="0 0 10 18" fill="none" stroke="#555" stroke-width="2"><path d="M1.500 11.500L5 8l3.500 3.500"/></svg>
        <div class="h-[92px] w-[15px] bg-[#cdcdcd]"></div>
        <svg class="mt-auto h-[18px] w-2.5 shrink-0" viewBox="0 0 10 18" fill="none" stroke="#555" stroke-width="2"><path d="M1.500 6.500L5 10l3.500-3.500"/></svg>
      </div>
      <div class="flex items-center justify-between pl-1 pr-1">
        <svg class="h-4 w-2.5" viewBox="0 0 10 16" fill="none" stroke="#555" stroke-width="2"><path d="M6.500 4.500L3 8l3.500 3.500"/></svg>
        <div class="ml-[35px] mr-[67px] h-[15px] flex-1 bg-[#cdcdcd]"></div>
        <svg class="h-4 w-2.5" viewBox="0 0 10 16" fill="none" stroke="#555" stroke-width="2"><path d="M3.500 4.500L7 8l-3.500 3.500"/></svg>
      </div>
    </div>
    <div class="mt-px flex h-5 shrink-0 items-center border-t border-white bg-linear-to-b from-[#e1ebf1] to-[#cddfe9]">
      <span class="h-full w-[199px] border-r border-[#9fc0d8] pl-px leading-5">Seite 1 von 2</span><span class="h-full w-[50px] border-r border-[#9fc0d8]"></span>
      <svg class="ml-auto mr-1 size-2.5" viewBox="0 0 10 10"><path fill="#2f6cab" d="M10 0v10H0z"/></svg>
    </div>
  </div>
</div>

<script>
  const marker = '<svg class="h-3 w-1.5" viewBox="0 0 6 12"><path d="M0 0v12l6-6z"/></svg>';
  const bar = '<td class="bg-linear-to-b from-[#dde9f1] to-[#c3d9e5] px-0!">';
  const render = (id, rows, right = []) => {
    document.getElementById(id).innerHTML = rows.map((r, n) =>
      '<tr>' + bar + (n ? '' : '<div class="flex justify-center">' + marker + '</div>') + '</td>' +
      r.map((c, i) => (right.includes(i) ? '<td class="text-right">' : '<td>') + c + '</td>').join('') + '</tr>').join('');
  };
  const wheel15 = ['FEL01', '15" Felge Standard'], wheel17 = ['FEL03', '17" Felge Standard'], car = ['AU01', 'aventos 1,6L'];
  render('backlog', [
    ['AU-16-1-00002', '10.10.2016', wheel15, '2,0000', '572,0000'],
    ['AU-16-1-00002', '10.10.2016', wheel17, '3,0000', '372,0000'],
    ['AU-16-1-00002', '10.10.2016', wheel15, '2,0000', '572,0000'],
    ['AU-16-1-00004', '10.10.2016', wheel15, '5,0000', '572,0000'],
    ['AU-16-1-00004', '10.10.2016', wheel17, '', ''],
    ['AU-16-1-00013', '05.12.2016', car, '', ''],
    ['AU-17-1-00003', '06.03.2017', wheel15, '', ''],
    ['AU-17-1-00005', '24.04.2017', wheel15, '', ''],
    ['AU-17-1-00008', '15.05.2017', car, '', ''],
    ['AU-17-1-00009', '08.05.2017', car, '', ''],
    ['AU-17-1-00010', '08.05.2017', wheel15, '', ''],
    ['AU-16-1-00001', '24.10.2016', car, '', '']
  ].map(([nr, date, art, open, stock]) => [nr, 'N', 'Greinar KG', '2', date, ...art, open, open && 'Stk', open && 'HL', stock, '', '']), [7, 10]);
  render('picklists', [['K-1600001', 'N', 'N']]);
  render('positions', [
    ['N', 'SYNERPY GmbH', 'AU-15-1-00001', 'AU01', 'aventos 1,6L'],
    ['N', 'Greinar KG', 'AU-16-1-00002', 'FEL03', '17" Felge Standard'],
    ['N', 'Greinar KG', 'AU-16-1-00002', 'MOT22', 'Zündkerzen'],
    ['N', 'Greinar KG', 'AU-16-1-00008', 'AU01', 'aventos 1,6L']
  ]);
</script>
</body>
</html>
